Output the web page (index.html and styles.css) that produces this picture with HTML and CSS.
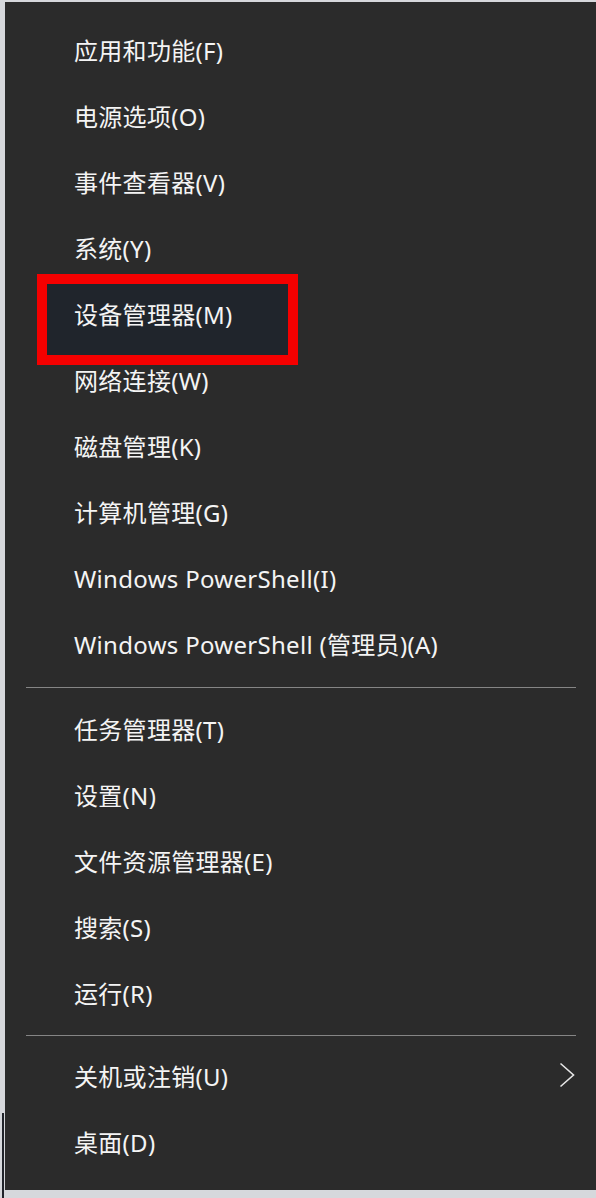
FILE: index.html
```html
<!DOCTYPE html>
<html lang="zh-CN">
<head>
<meta charset="utf-8">
<title>Win+X 菜单</title>
<link rel="stylesheet" href="styles.css">
</head>
<body>
<div class="backdrop-edge"></div>
<div class="menu">
  <div class="highlight"></div>
  <ul class="group">
    <li class="item">应用和功能(F)</li>
    <li class="item">电源选项(O)</li>
    <li class="item">事件查看器(V)</li>
    <li class="item">系统(Y)</li>
    <li class="item">设备管理器(M)</li>
    <li class="item">网络连接(W)</li>
    <li class="item">磁盘管理(K)</li>
    <li class="item">计算机管理(G)</li>
    <li class="item">Windows PowerShell(I)</li>
    <li class="item">Windows PowerShell (管理员)(A)</li>
  </ul>
  <div class="divider"></div>
  <ul class="group">
    <li class="item">任务管理器(T)</li>
    <li class="item">设置(N)</li>
    <li class="item">文件资源管理器(E)</li>
    <li class="item">搜索(S)</li>
    <li class="item">运行(R)</li>
  </ul>
  <div class="divider divider-low"></div>
  <ul class="group">
    <li class="item item-sub">关机或注销(U)
      <svg class="chevron" width="16" height="26" viewBox="0 0 16 26"><polyline points="1.5,1.5 14.5,13 1.5,24.5" fill="none" stroke="#e6e6e6" stroke-width="1.6"/></svg>
    </li>
    <li class="item">桌面(D)</li>
  </ul>
</div>
</body>
</html>
```
FILE: styles.css
```css
html, body {
  margin: 0;
  padding: 0;
}
body {
  width: 596px;
  height: 1198px;
  background: #d6d8dc;
  position: relative;
  overflow: hidden;
  font-family: "Noto Sans", "Noto Sans CJK SC", sans-serif;
}
.backdrop-edge {
  position: absolute;
  left: 2px;
  top: 1113px;
  width: 2px;
  height: 85px;
  background: #20232a;
}
.menu {
  position: relative;
  margin: 2px 0 0 5px;
  width: 591px;
  height: 1188px;
  box-sizing: border-box;
  padding: 16px 0 14px 0;
  background: #2b2b2b;
  color: #f4f4f4;
}
.group {
  list-style: none;
  margin: 0;
  padding: 0;
}
.item {
  position: relative;
  z-index: 1;
  display: flex;
  align-items: center;
  height: 66px;
  padding: 0 21px 0 69px;
  font-size: 24px;
  letter-spacing: 0.3px;
  line-height: 1;
  white-space: nowrap;
}
.item-sub {
  justify-content: space-between;
}
.chevron {
  display: block;
  margin-top: -4px;
}
.divider {
  height: 1px;
  margin: 9px 20px 9px 21px;
  background: #858585;
}
.divider-low {
  margin-top: 8px;
  margin-bottom: 8px;
}
.highlight {
  position: absolute;
  left: 32px;
  top: 272px;
  width: 241px;
  height: 71px;
  border: 10px solid #f50000;
  background: #20252c;
  z-index: 0;
}
```
